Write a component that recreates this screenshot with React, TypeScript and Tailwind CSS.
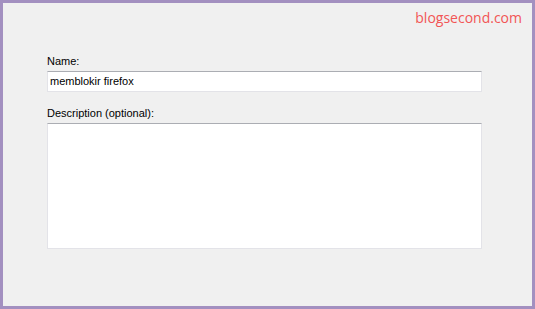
import React from 'react';

export default function App() {
  return (
    <div className="w-[535px] h-[309px] border-[3px] border-[#a390c0] bg-[#f0f0f0] flex flex-col overflow-hidden" style={{ fontFamily: '"Liberation Sans", Arial, sans-serif' }}>
      <div className="flex justify-end pr-[10px] pt-[6px] h-[24px]">
        <span className="text-[14px] leading-[17px] text-[#f25555] font-['Open_Sans',sans-serif]">blogsecond.com</span>
      </div>
      <div className="flex flex-col pl-[44px] pt-[28px] w-[479px]">
        <label className="text-[11px] leading-[13px] text-black">Name:</label>
        <div className="mt-[3px] h-[21px] bg-white border border-[#e3e3e8] border-t-[#abadb3] flex items-center pl-[2px] text-[11px] text-black">
          memblokir firefox
        </div>
        <label className="mt-[15px] text-[11px] leading-[13px] text-black">Description (optional):</label>
        <div className="mt-[3px] h-[126px] bg-white border border-[#e3e3e8] border-t-[#abadb3]" />
      </div>
    </div>
  );
}
